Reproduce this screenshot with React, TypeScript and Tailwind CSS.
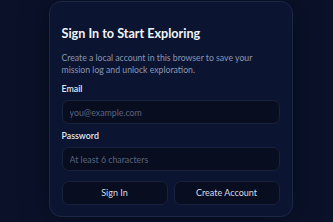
export default function App() {
  return (
    <div
      className="h-[222px] w-full overflow-hidden bg-[#0a1129] flex justify-center pl-[8px]"
      style={{ fontFamily: 'Lato, "Noto Sans", sans-serif' }}
    >
      <div className="mt-px h-[216px] w-[244px] rounded-[12px] border border-[#1b2747] bg-[#0b1430] px-3 pt-[23px] shadow-[0_0_30px_rgba(0,0,0,0.35)]">
        <h1 className="text-[12.6px] leading-[17px] font-bold text-[#f1f5f9]">Sign In to Start Exploring</h1>
        <p className="mt-[10px] text-[8.7px] leading-[11.5px] text-[#8a97b4]">
          Create a local account in this browser to save your mission log and unlock exploration.
        </p>
        <div className="mt-[8px] text-[8.8px] leading-[12px] font-semibold text-[#e2e8f0]">Email</div>
        <input
          className="mt-[5px] block h-[24px] w-full rounded-[7px] border border-[#18223e] bg-[#080d1f] px-[7px] text-[8.8px] text-[#e2e8f0] outline-none placeholder:text-[#5a6480]"
          placeholder="you@example.com"
        />
        <div className="mt-[6px] text-[8.8px] leading-[12px] font-semibold text-[#e2e8f0]">Password</div>
        <input
          type="password"
          className="mt-[5px] block h-[24px] w-full rounded-[7px] border border-[#18223e] bg-[#080d1f] px-[7px] text-[8.8px] text-[#e2e8f0] outline-none placeholder:text-[#5a6480]"
          placeholder="At least 6 characters"
        />
        <div className="mt-[10px] grid grid-cols-2 gap-[6px]">
          <button className="h-[24px] rounded-[7px] border border-[#18223e] bg-[#080d1f] text-[9px] text-[#d6dce6]">Sign In</button>
          <button className="h-[24px] rounded-[7px] border border-[#18223e] bg-[#080d1f] text-[9px] text-[#d6dce6]">Create Account</button>
        </div>
      </div>
    </div>
  );
}
